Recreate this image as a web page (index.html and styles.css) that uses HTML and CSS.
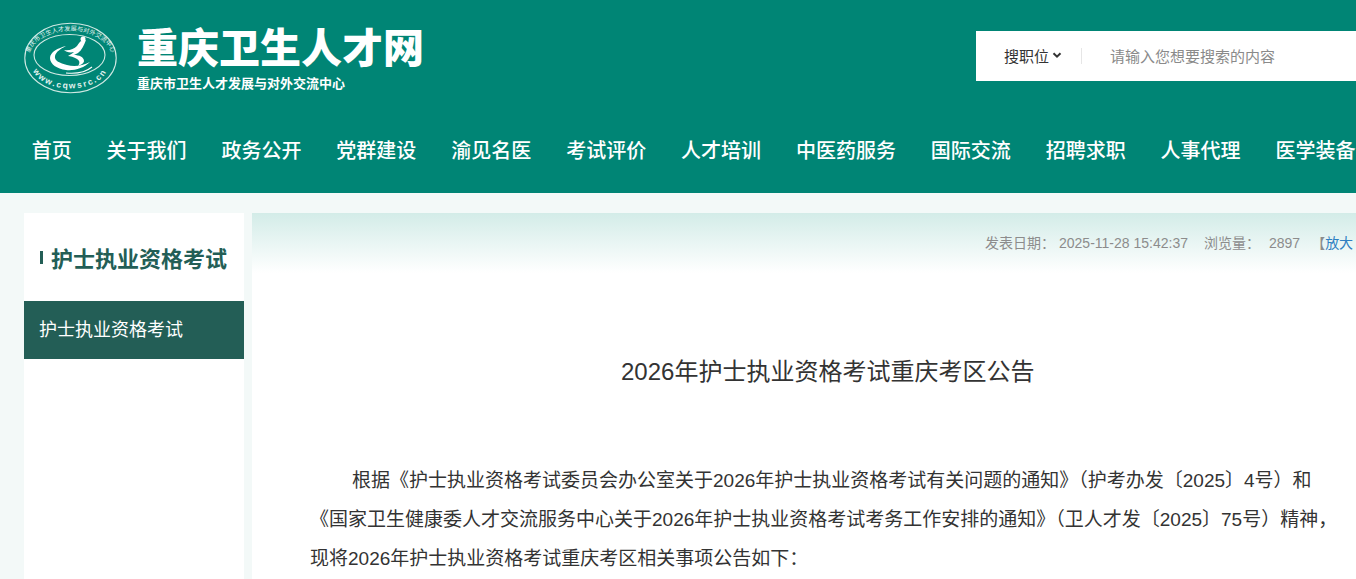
FILE: index.html
```html
<!DOCTYPE html>
<html lang="zh-CN">
<head>
<meta charset="utf-8">
<title>2026年护士执业资格考试重庆考区公告</title>
<link rel="stylesheet" href="styles.css">
</head>
<body>
<header class="header">
  <div class="top">
    <a class="brand">
      <svg class="logo" viewBox="0 0 94 76" width="94" height="76" aria-hidden="true">
        <defs>
          <path id="arcTop" d="M4.500 39 A41.500 28 0 0 1 88.500 39"/>
          <path id="arcBottom" d="M8 45 A38 23.500 0 0 0 84 45"/>
        </defs>
        <ellipse cx="46.500" cy="38" rx="45.700" ry="34.700" fill="none" stroke="#cfe9e3" stroke-width="1.100"/>
        <ellipse cx="45.500" cy="35" rx="35.500" ry="20.500" fill="none" stroke="#cfe9e3" stroke-width="1.100"/>
        <text class="logo-top"><textPath href="#arcTop" startOffset="50%" text-anchor="middle">重庆市卫生人才发展与对外交流中心</textPath></text>
        <text class="logo-bottom"><textPath href="#arcBottom" startOffset="50%" text-anchor="middle">www.cqwsrc.cn</textPath></text>
        <path fill="#fff" d="M42 26 C34 28 26 32 26 38 C26 44 33 49 42 50 C50 51 60 48 66 42 C58 46 50 47 43 45 C36 43 30 41 31 36 C32 32 36 29 42 26 Z"/>
        <path fill="#fff" d="M40 30 C45 31 50 29 53 26 C55 23 56 21 58 21 L62 20 C60 25 58 30 54 33 L50 35 C55 35 60 37 60 41 C60 43 57 45 54 46 C56 43 56 41 53 39 C50 37 46 36 44 36 C47 34 49 33 50 32 C46 33 42 32 40 30 Z"/>
        <circle cx="59" cy="19" r="2.500" fill="#fff"/>
        <path fill="none" stroke="#fff" stroke-width="1.100" d="M42 53 C52 54 62 52 68 47"/>
      </svg>
      <div class="brand-text">
        <div class="brand-name">重庆卫生人才网</div>
        <div class="brand-sub">重庆市卫生人才发展与对外交流中心</div>
      </div>
    </a>
    <div class="search">
      <div class="search-type">搜职位
        <svg class="chev" viewBox="0 0 10 7" width="10" height="7" aria-hidden="true"><path d="M1.500 1.200 L5 4.700 L8.500 1.200" fill="none" stroke="#333" stroke-width="2"/></svg>
      </div>
      <div class="search-input">请输入您想要搜索的内容</div>
    </div>
  </div>
  <nav class="nav">
    <a>首页</a><a>关于我们</a><a>政务公开</a><a>党群建设</a><a>渝见名医</a><a>考试评价</a><a>人才培训</a><a>中医药服务</a><a>国际交流</a><a>招聘求职</a><a>人事代理</a><a>医学装备</a>
  </nav>
</header>
<div class="layout">
  <aside class="side">
    <h2 class="side-title"><span class="side-mark"></span>护士执业资格考试</h2>
    <a class="side-item">护士执业资格考试</a>
  </aside>
  <main class="main">
    <div class="meta">
      <span class="meta-label">发表日期：</span><span class="meta-val date">2025-11-28 15:42:37</span><span class="meta-label short">浏览量：</span><span class="meta-val">2897</span><span>【<a class="blue">放大</a></span>
    </div>
    <h1 class="title">2026年护士执业资格考试重庆考区公告</h1>
    <div class="body">
      <p class="first">根据《护士执业资格考试委员会办公室关于2026年护士执业资格考试有关问题的通知》（护考办发〔2025〕4号）和</p>
      <p>《国家卫生健康委人才交流服务中心关于2026年护士执业资格考试考务工作安排的通知》（卫人才发〔2025〕75号）精神，</p>
      <p>现将2026年护士执业资格考试重庆考区相关事项公告如下：</p>
    </div>
  </main>
</div>
</body>
</html>
```
FILE: styles.css
```css
* { box-sizing: border-box; }
html, body { margin: 0; height: 579px; overflow: hidden; }
body { background: #f3f9f8; font-family: "Liberation Sans", "Noto Sans CJK SC", sans-serif; color: #333; }
.header { background: #008575; height: 193px; }
.top { display: flex; justify-content: space-between; height: 107px; }
.brand { display: flex; padding: 20px 0 0 24px; }
.logo { display: block; flex: none; }
.logo-top { font-size: 6.200px; fill: #e4f3f0; font-family: "Noto Sans CJK SC", sans-serif; }
.logo-bottom { font-size: 8.500px; font-weight: 700; letter-spacing: 1.700px; fill: #e4f3f0; font-family: "Liberation Sans", sans-serif; }
.brand-text { margin-left: 19px; color: #fff; }
.brand-name { font-family: "Noto Sans CJK SC", sans-serif; font-weight: 900; font-size: 41px; line-height: 48px; margin-top: 1px; white-space: nowrap; }
.brand-sub { font-size: 13px; font-weight: 700; line-height: 16px; margin-top: 7px; white-space: nowrap; }
.search { display: flex; align-items: center; width: 380px; height: 50px; margin-top: 31px; padding-bottom: 1px; background: #fff; font-size: 15px; }
.search-type { flex: none; width: 106px; height: 16px; padding-left: 28px; border-right: 1px solid #e6e6e6; display: flex; align-items: center; gap: 3px; color: #333; white-space: nowrap; }
.search-input { padding-left: 28px; color: #8a8a8a; white-space: nowrap; }
.nav { display: flex; gap: 34.900px; padding-left: 31.700px; height: 86px; white-space: nowrap; font-size: 20px; line-height: 86px; color: #fff; font-weight: 500; font-family: "Noto Sans CJK SC", sans-serif; }
.nav a { flex: none; }
.layout { display: flex; gap: 8px; padding: 20px 0 0 24px; }
.side { flex: none; width: 220px; height: 400px; background: #fff; }
.side-title { display: flex; align-items: center; height: 88px; margin: 0; padding-left: 16px; font-size: 22px; font-weight: 700; color: #235e56; white-space: nowrap; }
.side-mark { width: 3px; height: 13px; background: #235e56; margin-right: 8px; }
.side-item { display: block; height: 58px; line-height: 58px; padding-left: 15px; background: #235e56; color: #fff; font-size: 18px; white-space: nowrap; }
.main { flex: 1; min-width: 0; min-height: 400px; background: linear-gradient(#d3ece8 0, #fff 60px, #fff 100%); padding: 0 0 0 58px; overflow: hidden; }
.meta { display: flex; margin-left: 675px; height: 60px; padding-top: 22px; font-size: 14px; line-height: 16px; color: #8c8c8c; white-space: nowrap; }
.meta-label { margin-right: 4px; }
.meta-label.short { margin-right: 9px; }
.meta-val { margin-right: 11px; }
.meta-val.date { margin-right: 16px; }
.blue { color: #2f7fc1; }
.title { margin: 79px 0 0 0; padding-left: 311px; font-size: 24px; font-weight: 400; line-height: 40px; color: #333; white-space: nowrap; }
.body { margin-top: 69px; font-size: 19px; line-height: 39px; color: #333; white-space: nowrap; }
.body p { margin: 0; }
.first { text-indent: 42px; }
```
